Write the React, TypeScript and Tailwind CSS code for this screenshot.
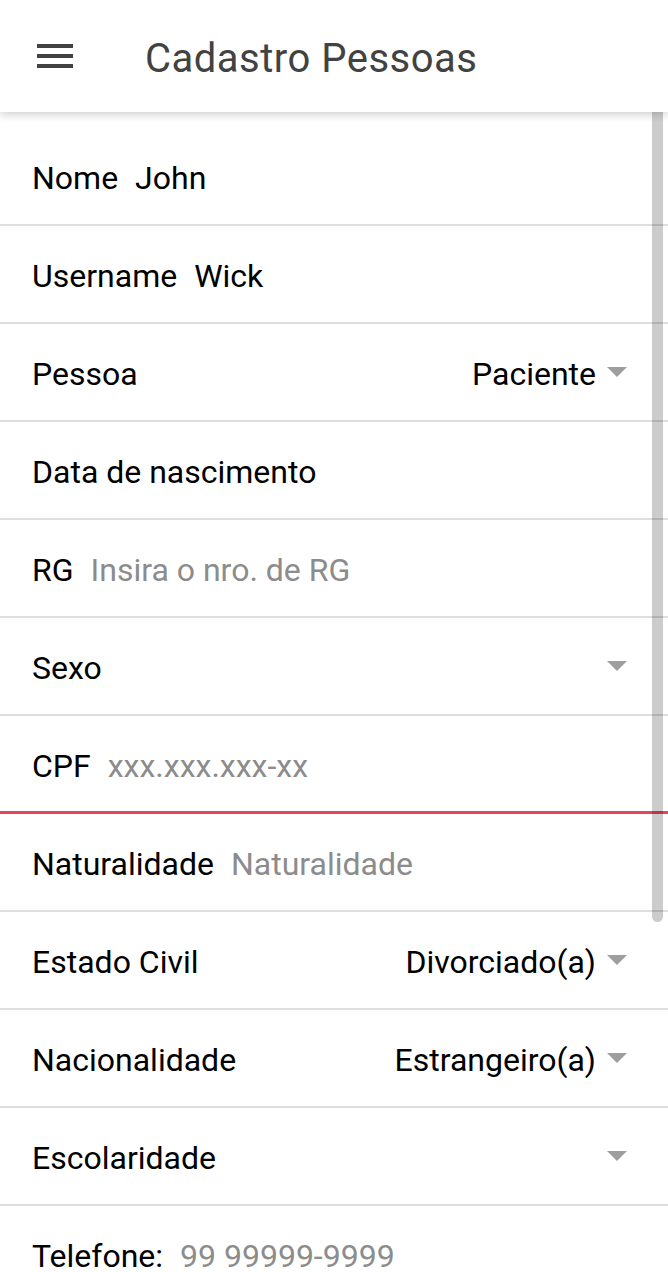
import type { ReactNode } from 'react'

type Field =
  | { kind: 'text'; label: string; value?: string; placeholder?: string }
  | { kind: 'select'; label: string; value?: string }

const FIELDS: Field[] = [
  { kind: 'text', label: 'Nome', value: 'John' },
  { kind: 'text', label: 'Username', value: 'Wick' },
  { kind: 'select', label: 'Pessoa', value: 'Paciente' },
  { kind: 'text', label: 'Data de nascimento' },
  { kind: 'text', label: 'RG', placeholder: 'Insira o nro. de RG' },
  { kind: 'select', label: 'Sexo' },
  { kind: 'text', label: 'CPF', placeholder: 'xxx.xxx.xxx-xx' },
  { kind: 'text', label: 'Naturalidade', placeholder: 'Naturalidade' },
  { kind: 'select', label: 'Estado Civil', value: 'Divorciado(a)' },
  { kind: 'select', label: 'Nacionalidade', value: 'Estrangeiro(a)' },
  { kind: 'select', label: 'Escolaridade' },
  { kind: 'text', label: 'Telefone:', placeholder: '99 99999-9999' }
]

function MenuIcon() {
  return (
    <svg width="48" height="48" viewBox="0 0 24 24" fill="#424242">
      <rect x="3" y="6" width="18" height="2" />
      <rect x="3" y="11" width="18" height="2" />
      <rect x="3" y="16" width="18" height="2" />
    </svg>
  )
}

function Caret() {
  return (
    <svg width="20" height="10" viewBox="0 0 20 10" className="shrink-0">
      <path d="M0 0 L20 0 L10 10 Z" fill="#9e9e9e" />
    </svg>
  )
}

function Row({ children, invalid }: { children: ReactNode; invalid?: boolean }) {
  return (
    <div
      className={`flex items-center h-[98px] pt-[4px] pl-[32px] pr-[41px] ${
        invalid ? 'border-b-[3px] border-[#eb445a]' : 'border-b-2 border-[#dedede]'
      }`}
    >
      {children}
    </div>
  )
}

export default function App() {
  return (
    <div
      className="relative h-[1272px] w-[668px] overflow-hidden bg-white text-black"
      style={{ fontFamily: 'Roboto, "Noto Sans", sans-serif' }}
    >
      {/* Toolbar */}
      <header className="relative z-10 flex h-[112px] items-center bg-white shadow-[0_3px_8px_rgba(0,0,0,0.18)]">
        <div className="ml-[31px]">
          <MenuIcon />
        </div>
        <h1 className="ml-[66px] mt-[6px] text-[40px] font-normal tracking-[0.5px] text-[#424242]">
          Cadastro Pessoas
        </h1>
      </header>

      {/* Scrollbar */}
      <div className="absolute right-[5px] top-[112px] z-20 h-[810px] w-[11px] rounded-b-[6px] bg-black/20" />

      <div className="pt-[16px] text-[32px] leading-none">
        {FIELDS.map((f) => (
          <Row key={f.label} invalid={f.label === 'CPF'}>
            <span className="whitespace-nowrap">{f.label}</span>
            {f.kind === 'text' ? (
              <span className={`ml-[17px] whitespace-nowrap ${f.value ? 'text-black' : 'text-[#8c8c8c]'}`}>
                {f.value ?? f.placeholder ?? ''}
              </span>
            ) : (
              <>
                <span className="ml-auto whitespace-nowrap">{f.value ?? ''}</span>
                <span className="ml-[11px] -mt-[4px]">
                  <Caret />
                </span>
              </>
            )}
          </Row>
        ))}
      </div>
    </div>
  )
}
